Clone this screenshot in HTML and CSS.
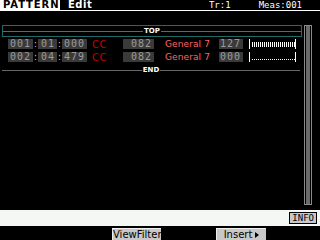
FILE: index.html
```html
<!doctype html>
<html>
<head>
    <meta charset="UTF-8">
    <title>PATTERN Edit</title>
    <link rel="stylesheet" href="styles.css">
</head>
<body>
<div class="screen">
    <div class="header">
        <span class="title">PATTERN</span>
        <span class="mode">Edit</span>
        <span class="track">Tr:1</span>
        <span class="meas">Meas:001</span>
    </div>
    <div class="main">
        <div class="list">
            <div class="top_box">
                <div class="divider"><span>TOP</span></div>
            </div>
            <div class="row">
                <span class="cell w3">001</span><span class="colon">:</span>
                <span class="cell w2">01</span><span class="colon">:</span>
                <span class="cell w3">000</span>
                <span class="type">CC</span>
                <span class="cell num">082</span>
                <span class="name">General 7</span>
                <span class="cell val">127</span>
                <span class="bar full"></span>
            </div>
            <div class="row">
                <span class="cell w3">002</span><span class="colon">:</span>
                <span class="cell w2">04</span><span class="colon">:</span>
                <span class="cell w3">479</span>
                <span class="type">CC</span>
                <span class="cell num">082</span>
                <span class="name">General 7</span>
                <span class="cell val">000</span>
                <span class="bar empty"></span>
            </div>
            <div class="divider end"><span>END</span></div>
        </div>
        <div class="scroll"><div class="thumb"></div></div>
    </div>
    <div class="info_bar"><span class="btn_info">INFO</span></div>
    <div class="keys">
        <span class="key k_view">ViewFilter</span>
        <span class="key k_insert">Insert<i class="arrow"></i></span>
    </div>
</div>
</body>
</html>
```

FILE: styles.css
```css
body{margin:0;background:#000;}
.screen{width:320px;height:240px;background:#000;display:flex;flex-direction:column;font-family:"DejaVu Sans",sans-serif;color:#fff;overflow:hidden;}
/* 标题栏 */
.header{height:10px;border-bottom:1px solid #fff;display:flex;align-items:flex-start;font-size:9px;line-height:10px;}
.title{background:#fff;color:#000;font-weight:bold;font-size:10px;line-height:10px;width:57px;height:10px;padding-left:3px;letter-spacing:0.9px;}
.mode{font-weight:bold;font-size:10px;margin-left:8px;letter-spacing:0.5px;}
.track{margin-left:auto;font-family:"DejaVu Sans Mono",monospace;}
.meas{margin-left:28px;margin-right:18px;font-family:"DejaVu Sans Mono",monospace;}
.main{display:flex;height:180px;margin-top:14px;}
.list{width:300px;margin-left:2px;display:flex;flex-direction:column;}
.top_box{height:10px;border:1px solid #1f6c6c;display:flex;align-items:center;}
.divider{display:flex;align-items:center;width:100%;font-size:7px;font-weight:bold;line-height:7px;color:#fff;}
.divider:before,.divider:after{content:"";flex:1;height:1px;background:#666;}
.divider span{padding:0 1px;}
.divider.end{margin-top:5px;width:298px;}
.row{display:flex;align-items:center;height:10px;margin-top:2px;padding-left:6px;font-size:10px;}
.row+.row{margin-top:3px;}
.cell{height:10px;line-height:10px;background:#3a3a3a;color:#9a9a9a;text-align:right;padding-right:2px;box-sizing:border-box;font-family:"DejaVu Sans Mono",monospace;letter-spacing:1px;}
.w3{width:25px;}
.w2{width:19px;}
.colon{width:5px;text-align:center;color:#ccc;font-size:9px;}
.type{color:#c80000;margin-left:5px;width:31px;font-size:10px;letter-spacing:0.5px;}
.num{width:31px;}
.name{color:#ff6464;margin-left:11px;width:54px;font-size:9px;letter-spacing:0.1px;}
.val{width:24px;}
.bar{width:47px;height:10px;margin-left:6px;border-left:1px solid #fff;border-right:1px solid #fff;box-sizing:border-box;}
.full{background:repeating-linear-gradient(90deg,transparent 0 1px,#fff 1px 2px) 1px 3px/44px 5px no-repeat;}
.empty{background:repeating-linear-gradient(90deg,transparent 0 1px,#fff 1px 2px) 1px 7px/44px 1px no-repeat;}
.scroll{width:8px;height:180px;margin-left:2px;border:1px solid #8a8a8a;box-sizing:border-box;background:#000;padding:0 1px;}
.thumb{height:100%;background:#6a6a6a;}
/* 信息栏 */
.info_bar{height:16px;margin-top:5px;background:#f4f8f4;display:flex;align-items:center;justify-content:flex-end;}
.btn_info{height:10px;line-height:10px;border:1px solid #000;background:#c8c8c8;color:#000;font-size:9px;padding:0 2px;margin-right:3px;font-family:"DejaVu Sans Mono",monospace;}
.keys{height:12px;margin-top:2px;position:relative;}
.key{position:absolute;top:0;height:12px;line-height:12px;background:#c8c8c8;border-top:1px solid #eee;border-left:1px solid #eee;box-sizing:border-box;color:#000;font-size:10px;text-align:center;}
.k_view{left:112px;width:49px;}
.k_insert{left:216px;width:50px;}
.arrow{display:inline-block;width:0;height:0;border-left:4px solid #000;border-top:3px solid transparent;border-bottom:3px solid transparent;margin-left:3px;}
```
